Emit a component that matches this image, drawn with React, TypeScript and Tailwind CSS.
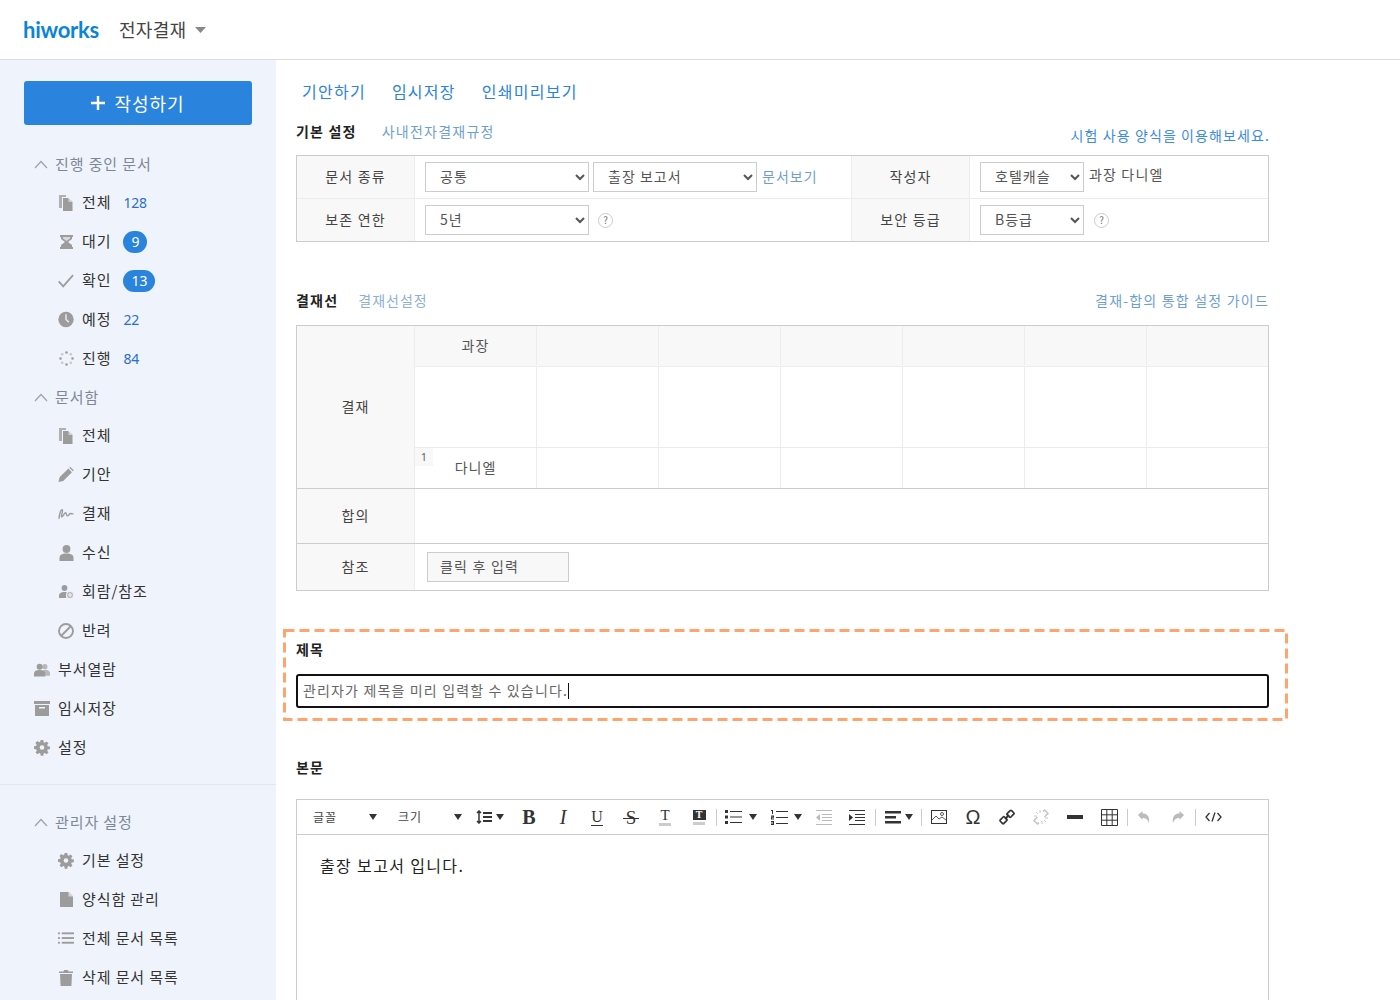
import React from "react";

const F = "[font-family:'Noto_Sans_CJK_KR','Noto_Sans',sans-serif]";
const G = "#9c9c9c";
const BG = "#eff3fb";

const Docs = () => (
  <svg width="14" height="16" viewBox="0 0 14 16"><path d="M0 0h7v2H3v11H0z" fill="#b0b0b0" /><path d="M4 3h5l4.500 4v9H4z" fill={G} /><path d="M9.500 3l4 4h-4z" fill="#d0d0d0" /></svg>
);
const Hourglass = () => (
  <svg width="13" height="14" viewBox="0 0 13 14"><path d="M0 0h13v2h-1v2L8 7l4 3v2h1v2H0v-2h1v-2l4-3-4-3V2H0z" fill={G} /><path d="M3 2h7v1.500L6.500 6 3 3.500z" fill="#d6d9df" /></svg>
);
const Check = () => (
  <svg width="17" height="14" viewBox="0 0 17 14"><path d="M.8 7.500l4.700 5.200L16 .8" stroke={G} strokeWidth="1.900" fill="none" /></svg>
);
const Clock = () => (
  <svg width="17" height="17" viewBox="0 0 17 17"><circle cx="8.500" cy="8.500" r="8.200" fill={G} /><path d="M8.500 3v5.500l3 3" stroke={BG} strokeWidth="1.400" fill="none" /></svg>
);
const Spinner = () => (
  <svg width="15" height="15" viewBox="0 0 15 15">
    {[[7.5,1.5],[11.8,3.2],[13.5,7.5],[11.8,11.8],[7.5,13.5],[3.2,11.8],[1.5,7.5],[3.2,3.2]].map(([x,y],i)=>(
      <circle key={i} cx={x} cy={y} r={1.3} fill={i%2?"#c8c8c8":G} />
    ))}
  </svg>
);
const Pencil = () => (
  <svg width="17" height="17" viewBox="0 0 17 17"><path d="M.5 16.500l1.200-5L11 2.200 14.800 6 5.500 15.300zM12 1.200l1-1 3.800 3.800-1 1z" fill={G} /></svg>
);
const Sign = () => (
  <svg width="17" height="12" viewBox="0 0 17 12"><path d="M1 11C1.500 6 3 1 4.500 1.500 6 2 2.500 9 4 9s3-5 4.200-4.300C9.500 5.500 8.500 8 10 8s2-3 3.500-2.500 2 .6 3 0" stroke={G} strokeWidth="1.500" fill="none" /></svg>
);
const User = () => (
  <svg width="15" height="16" viewBox="0 0 15 16"><circle cx="7.500" cy="4" r="3.900" fill={G} /><path d="M.5 16v-3c0-3 2-4.500 7-4.500s7 1.500 7 4.500v3z" fill={G} /></svg>
);
const UserPlus = () => (
  <svg width="15" height="14" viewBox="0 0 15 14"><circle cx="5.500" cy="3" r="2.900" fill={G} /><path d="M0 13v-2c0-3 2-4 5.500-4 1 0 2 .1 2.600.3L7 13z" fill={G} /><circle cx="11" cy="10" r="3.700" fill="#bdbdbd" stroke={BG} /><path d="M9 10h4M11 8v4" stroke={BG} /></svg>
);
const Ban = () => (
  <svg width="16" height="16" viewBox="0 0 16 16"><circle cx="8" cy="8" r="7" fill="none" stroke={G} strokeWidth="1.900" /><path d="M3 13L13 3" stroke={G} strokeWidth="1.900" /></svg>
);
const Users = () => (
  <svg width="17" height="14" viewBox="0 0 17 14"><circle cx="11.500" cy="3.500" r="2.800" fill="#b8b8b8" /><path d="M10 7h3c3 0 4 2 4 4v2h-6z" fill="#b8b8b8" /><circle cx="6" cy="3.500" r="3.200" fill={G} /><path d="M0 14v-3c0-3 2-4 6-4s6 1 6 4v3z" fill={G} /></svg>
);
const Archive = () => (
  <svg width="16" height="15" viewBox="0 0 16 15"><path d="M0 0h16v3H0z" fill={G} /><path d="M1 4h14v11H1z" fill={G} /><path d="M5 6h6v1.500H5z" fill={BG} /></svg>
);
const Gear = () => (
  <svg width="17" height="17" viewBox="0 0 24 24"><path fill={G} fillRule="evenodd" d="M14 .8l.5 3.300 1.700.7 2.700-1.900 2.800 2.800-1.900 2.700.7 1.700 3.300.5v4l-3.300.5-.7 1.700 1.900 2.700-2.800 2.800-2.700-1.900-1.700.7-.5 3.300h-4l-.5-3.300-1.700-.7-2.700 1.900-2.800-2.800 1.900-2.700-.7-1.700L0 14v-4l3.300-.5.7-1.700L2.100 5.100l2.800-2.800 2.700 1.900 1.700-.7L10 .8zM12 8.500a3.500 3.500 0 100 7 3.500 3.500 0 000-7z" /></svg>
);
const Doc = () => (
  <svg width="13" height="15" viewBox="0 0 13 15"><path d="M0 0h8.500L13 4.500V15H0z" fill={G} /><path d="M8.500 0L13 4.500H8.500z" fill="#d5d5d5" /></svg>
);
const ListI = () => (
  <svg width="17" height="13" viewBox="0 0 17 13"><g fill={G}><rect x="0" y="0" width="2" height="2" /><rect x="4" y="0" width="13" height="2" /><rect x="0" y="5" width="2" height="2" /><rect x="4" y="5" width="13" height="2" /><rect x="0" y="10" width="2" height="2" /><rect x="4" y="10" width="13" height="2" /></g></svg>
);
const Trash = () => (
  <svg width="14" height="16" viewBox="0 0 14 16"><path d="M5 0h4l.5 1.500H14V3H0V1.500H4.500zM1 4h12l-.6 12H1.600z" fill={G} /></svg>
);
const Chev = () => (
  <svg width="14" height="9" viewBox="0 0 14 9" className="shrink-0"><path d="M1 8l6-6.500L13 8" stroke="#9aa3ad" strokeWidth="1.200" fill="none" /></svg>
);

function Head({ t, c }: { t: string; c?: string }) {
  return (
    <div className={`flex h-[39px] items-center pl-[34px] ${c ?? ""}`}>
      <Chev />
      <span className="ml-[7px] text-[15px] tracking-[0.9px] text-[#7d8896]">{t}</span>
    </div>
  );
}
function Item({ icon, t, n, b }: { icon: React.ReactNode; t: string; n?: string; b?: string }) {
  return (
    <div className="flex h-[39px] items-center pb-[2px] pl-[58px]">
      <span className="flex w-[16px] justify-center">{icon}</span>
      <span className="ml-[8px] text-[15px] tracking-[0.9px] text-[#333]">{t}</span>
      {n && <span className="ml-[12px] text-[14px] tracking-[-0.2px] text-[#2a6fc9] [font-family:'Noto_Sans',sans-serif]">{n}</span>}
      {b && (
        <span className="ml-[12px] flex h-[22px] min-w-[24px] items-center justify-center rounded-full bg-[#2a83dc] px-[8px] text-[14px] text-white [font-family:'Noto_Sans',sans-serif]">
          {b}
        </span>
      )}
    </div>
  );
}
function Top({ icon, t, c }: { icon: React.ReactNode; t: string; c?: string }) {
  return (
    <div className={`flex h-[39px] items-center pl-[34px] ${c ?? ""}`}>
      <span className="flex w-[16px] justify-center">{icon}</span>
      <span className="ml-[8px] text-[15px] tracking-[0.9px] text-[#333]">{t}</span>
    </div>
  );
}

const Sel = ({ w, t }: { w: string; t: string }) => (
  <select defaultValue={t} className={`h-[30px] appearance-auto rounded-none border border-[#ccc] bg-white pb-[2px] pl-[10px] text-[14px] tracking-[1px] text-[#555] ${w}`}>
    <option>{t}</option>
  </select>
);
const Help = ({ c }: { c?: string }) => (
  <span className={`flex h-[15px] w-[15px] items-center justify-center rounded-full border border-[#ccc] text-[10px] leading-none text-[#777] ${c ?? "ml-[9px]"}`}>?</span>
);
const Th = ({ t }: { t: string }) => (
  <div className="flex w-[118px] shrink-0 items-center justify-center border-r border-[#ececec] bg-[#f8f8f8] pb-[2px] text-[14px] tracking-[1.15px] text-[#444]">{t}</div>
);

const ic = "#333";
const Tri = ({ c }: { c: string }) => <svg width="8" height="6" viewBox="0 0 8 6" className={`shrink-0 ${c}`}><path d="M0 0h8L4 6z" fill="#333" /></svg>;
const Sep = ({ c }: { c?: string }) => <span className={`h-[17px] w-px shrink-0 bg-[#ccc] ${c ?? ""}`} />;
const Tb = ({ c, children }: { c?: string; children: React.ReactNode }) => <span className={`flex w-[34px] shrink-0 items-center justify-center ${c ?? ""}`}>{children}</span>;
const Serif = "[font-family:'Liberation_Serif',serif]";

export default function App() {
  return (
    <div className={`h-[1000px] w-[1400px] overflow-hidden bg-white ${F}`}>
      <header className="flex h-[60px] items-center border-b border-[#dcdcdc] pl-[23px]">
        <span className="text-[22px] font-bold leading-none tracking-[-0.25px] text-[#0a84d8] [font-family:'Lato',sans-serif]">hiworks</span>
        <span className="ml-[20px] text-[18px] tracking-[0.3px] text-[#444]">전자결재</span>
        <svg width="11" height="6" viewBox="0 0 11 6" className="ml-[9px] mt-[1px]"><path d="M0 0h11L5.500 6z" fill="#888" /></svg>
      </header>
      <div className="flex h-[940px]">
        <aside className="w-[276px] shrink-0 bg-[#eff3fb]">
          <div className="px-[24px] pt-[21px]">
            <button className="flex h-[44px] w-[228px] items-center justify-center rounded-[3px] bg-[#2a83dc] text-[18px] tracking-[1px] text-white">
              <svg width="14" height="14" viewBox="0 0 14 14" className="mr-[9px]"><path d="M7 0v14M0 7h14" stroke="#fff" strokeWidth="2.400" /></svg>
              작성하기
            </button>
          </div>
          <div className="mt-[20px]">
            <Head t="진행 중인 문서" />
            <Item icon={<Docs />} t="전체" n="128" />
            <Item icon={<Hourglass />} t="대기" b="9" />
            <Item icon={<Check />} t="확인" b="13" />
            <Item icon={<Clock />} t="예정" n="22" />
            <Item icon={<Spinner />} t="진행" n="84" />
            <Head t="문서함" c="-mt-[1px]" />
            <Item icon={<Docs />} t="전체" />
            <Item icon={<Pencil />} t="기안" />
            <Item icon={<Sign />} t="결재" />
            <Item icon={<User />} t="수신" />
            <Item icon={<UserPlus />} t="회람/참조" />
            <Item icon={<Ban />} t="반려" />
            <Top icon={<Users />} t="부서열람" c="-mt-[1px]" />
            <Top icon={<Archive />} t="임시저장" />
            <Top icon={<Gear />} t="설정" />
          </div>
          <div className="mt-[17px] border-t border-[#e1e6ef] pt-[18px]">
            <Head t="관리자 설정" />
            <Item icon={<Gear />} t="기본 설정" />
            <Item icon={<Doc />} t="양식함 관리" />
            <Item icon={<ListI />} t="전체 문서 목록" />
            <Item icon={<Trash />} t="삭제 문서 목록" />
          </div>
        </aside>
        <main className="w-[993px] pl-[20px]">
          <div className="flex h-[64px] items-center pb-[2px] pl-[6px] text-[16px] tracking-[1.25px] text-[#2a83dc]">
            <span>기안하기</span><span className="ml-[26px]">임시저장</span><span className="ml-[26px]">인쇄미리보기</span>
          </div>
          <div className="-mt-[3px] flex h-[34px] items-start justify-between">
            <div className="flex items-center">
              <span className="text-[14px] font-semibold tracking-[1.2px] text-[#222]">기본 설정</span>
              <span className="ml-[25px] text-[14px] tracking-[1.25px] text-[#6f9fd0]">사내전자결재규정</span>
            </div>
            <span className="-mr-[1px] pt-[4px] text-[14px] tracking-[1.1px] text-[#3d8be0]">시험 사용 양식을 이용해보세요.</span>
          </div>
          <div className="w-[973px] border border-[#ccc]">
            <div className="flex h-[43px] border-b border-[#ececec]">
              <Th t="문서 종류" />
              <div className="flex w-[437px] items-center border-r border-[#ececec] pl-[10px]">
                <Sel w="w-[164px]" t="공통" />
                <Sel w="ml-[4px] w-[164px]" t="출장 보고서" />
                <span className="mb-[2px] ml-[5px] text-[14px] tracking-[1px] text-[#6f9fd0]">문서보기</span>
              </div>
              <Th t="작성자" />
              <div className="flex items-center pl-[10px]">
                <Sel w="w-[104px]" t="호텔캐슬" />
                <span className="mb-[6px] ml-[5px] text-[14px] tracking-[1.15px] text-[#555]">과장 다니엘</span>
              </div>
            </div>
            <div className="flex h-[42px]">
              <Th t="보존 연한" />
              <div className="flex w-[437px] items-center border-r border-[#ececec] pl-[10px]">
                <Sel w="w-[164px]" t="5년" />
                <Help />
              </div>
              <Th t="보안 등급" />
              <div className="flex items-center pl-[10px]">
                <Sel w="w-[104px]" t="B등급" />
                <Help c="ml-[10px]" />
              </div>
            </div>
          </div>
          <div className="mt-[41px] flex h-[42px] items-start justify-between pt-[7px]">
            <div className="flex items-center">
              <span className="text-[14px] font-semibold tracking-[1.2px] text-[#222]">결재선</span>
              <span className="ml-[20px] text-[14px] tracking-[1px] text-[#8eb0d4]">결재선설정</span>
            </div>
            <span className="text-[14px] tracking-[1.2px] text-[#6f9fd0]">결재-합의 통합 설정 가이드</span>
          </div>
          <div className="w-[973px] border border-[#ccc]">
            <div className="flex h-[163px] border-b border-[#ccc]">
              <Th t="결재" />
              <div className="flex-1">
                <div className="flex h-[41px] border-b border-[#ececec] bg-[#f8f8f8] pb-[1px] text-[14px] tracking-[1px] text-[#555]">
                  {["과장", "", "", "", "", "", ""].map((t, i) => (
                    <div key={i} className={`flex items-center justify-center ${i < 6 ? "w-[122px] border-r border-[#ececec]" : "w-[121px]"}`}>{t}</div>
                  ))}
                </div>
                <div className="flex h-[81px] border-b border-[#ececec]">
                  {[0, 1, 2, 3, 4, 5, 6].map((i) => (
                    <div key={i} className={i < 6 ? "w-[122px] border-r border-[#ececec]" : "w-[121px]"} />
                  ))}
                </div>
                <div className="flex h-[40px] text-[14px] tracking-[1px] text-[#555]">
                  {["다니엘", "", "", "", "", "", ""].map((t, i) => (
                    <div key={i} className={`relative flex items-center justify-center ${i < 6 ? "w-[122px] border-r border-[#ececec]" : "w-[121px]"}`}>
                      {i === 0 && <span className="absolute left-0 top-0 flex h-[18px] w-[18px] items-center justify-center bg-[#f8f8f8] text-[11px] tracking-normal text-[#666] [font-family:'Noto_Sans',sans-serif]">1</span>}
                      <span className="-mt-[1px]">{t}</span>
                    </div>
                  ))}
                </div>
              </div>
            </div>
            <div className="flex h-[55px] border-b border-[#ccc]">
              <Th t="합의" />
            </div>
            <div className="flex h-[46px]">
              <Th t="참조" />
              <div className="flex items-center pl-[12px]">
                <div className="flex h-[30px] w-[142px] items-center border border-[#ccc] bg-[#f8f8f8] pb-[2px] pl-[12px] text-[14px] tracking-[1.2px] text-[#555]">클릭 후 입력</div>
              </div>
            </div>
          </div>
          <div className="relative -ml-[13px] mt-[38px] h-[92px] w-[1005px] px-[13px] pt-[10px]">
            <svg width="1005" height="92" viewBox="0 0 1005 92" className="absolute left-0 top-0">
              <rect x="1.500" y="1.500" width="1002" height="89" fill="none" stroke="#ffa46c" strokeWidth="3" strokeDasharray="10 5" />
            </svg>
            <div className="text-[14px] font-semibold leading-[20px] tracking-[1px] text-[#222]">제목</div>
            <div className="mt-[15px] flex h-[34px] w-[973px] items-center rounded-[3px] border-2 border-[#111] pb-[1px] pl-[5px] text-[14px] tracking-[1.15px] text-[#666]">
              관리자가 제목을 미리 입력할 수 있습니다.
              <span className="h-[16px] w-px bg-[#111]" />
            </div>
          </div>
          <div className="mt-[36px] text-[14px] font-semibold leading-[20px] tracking-[1px] text-[#222]">본문</div>
          <div className="mt-[22px] h-[300px] w-[973px] border border-[#ccc]">
            <div className="flex h-[35px] items-center border-b border-[#ccc] pl-[16px] text-[#333]">
              <span className="w-[56px] shrink-0 text-[12px] tracking-[1px] text-[#444]">글꼴</span>
              <Tri c="" />
              <span className="ml-[21px] w-[56px] shrink-0 text-[12px] tracking-[1px] text-[#444]">크기</span>
              <Tri c="" />
              <svg width="17" height="14" viewBox="0 0 17 14" className="ml-[14px] shrink-0"><path d="M3 1v12M1 3l2-2 2 2M1 11l2 2 2-2" stroke={ic} strokeWidth="1.500" fill="none" /><path d="M7 2h9v2H7zM7 6h9v2H7zM7 10h9v2H7z" fill={ic} /></svg>
              <Tri c="ml-[3px]" />
              <Tb c="ml-[8px]"><span className={`text-[20px] font-bold leading-none text-[#333] ${Serif}`}>B</span></Tb>
              <Tb><span className={`text-[20px] italic leading-none text-[#333] ${Serif}`}>I</span></Tb>
              <Tb><span className={`border-b border-[#333] text-[16px] leading-[16px] text-[#333] ${Serif}`}>U</span></Tb>
              <Tb><span className={`relative text-[19px] leading-none text-[#333] ${Serif}`}>S<span className="absolute -left-[3px] -right-[3px] top-[10px] h-px bg-[#333]" /></span></Tb>
              <Tb><span className="flex flex-col items-center"><span className={`text-[15px] leading-[14px] text-[#333] ${Serif}`}>T</span><span className="mt-[1px] h-[3px] w-[12px] bg-[#ccc]" /></span></Tb>
              <Tb><span className="flex flex-col items-center"><span className={`flex h-[10px] w-[13px] items-center justify-center bg-[#333] text-[10px] font-bold leading-none text-white ${Serif}`}>T</span><span className="mt-[2px] h-[3px] w-[12px] bg-[#ccc]" /></span></Tb>
              <Sep />
              <svg width="17" height="14" viewBox="0 0 17 14" className="ml-[8px] shrink-0"><path d="M0 0h3v3H0zM0 5.500h3v3H0zM0 11h3v3H0z" fill={ic} /><path d="M5 1.500h12M5 7h12M5 12.500h12" stroke={ic} /></svg>
              <Tri c="ml-[7px]" />
              <svg width="17" height="15" viewBox="0 0 17 15" className="ml-[14px] shrink-0"><path d="M5 1.500h12M5 7.500h12M5 13.500h12" stroke={ic} /><path d="M0 0h2v4H1V1H0zM0 5.500h3v2.200H1v.8h2v1H0V6.800h2v-.3H0zM0 11h3v4H0v-1h2v-.5H0v-1h2V12H0z" fill={ic} /></svg>
              <Tri c="ml-[6px]" />
              <svg width="16" height="15" viewBox="0 0 16 15" className="ml-[14px] shrink-0"><path d="M0 .5h16M6 4.500h10M6 7.500h10M6 10.500h10M0 14.500h16" stroke="#bbb" /><path d="M4 4v7L0 7.500z" fill="#bbb" /></svg>
              <svg width="16" height="15" viewBox="0 0 16 15" className="ml-[17px] shrink-0"><path d="M0 .5h16M6 4.500h10M6 7.500h10M6 10.500h10M0 14.500h16" stroke={ic} /><path d="M0 4v7l4-3.500z" fill={ic} /></svg>
              <Sep c="ml-[10px]" />
              <svg width="16" height="13" viewBox="0 0 16 13" className="ml-[9px] shrink-0"><path d="M0 0h16v2.500H0zM0 5h11v2.500H0zM0 10h16v2.500H0z" fill={ic} /></svg>
              <Tri c="ml-[4px]" />
              <Sep c="ml-[8px]" />
              <svg width="16" height="14" viewBox="0 0 16 14" className="ml-[9px] shrink-0"><rect x=".5" y=".5" width="15" height="13" fill="none" stroke={ic} /><path d="M1 10l4-4 3 3 3-2 4 3" fill="none" stroke={ic} strokeWidth=".8" /><circle cx="11" cy="4" r="1.500" fill="none" stroke={ic} strokeWidth=".8" /></svg>
              <Tb c="ml-[9px]"><span className="text-[20px] leading-none text-[#333] [font-family:'Liberation_Sans',sans-serif]">Ω</span></Tb>
              <Tb><svg width="16" height="16" viewBox="0 0 16 16"><g fill="none" stroke={ic} strokeWidth="1.700"><rect x="9" y="1.800" width="5" height="6" rx="1" transform="rotate(45 11.500 4.800)" /><rect x="2" y="8.200" width="5" height="6" rx="1" transform="rotate(45 4.500 11.200)" /></g><path d="M6 10l4-4" stroke={ic} strokeWidth="1.800" /></svg></Tb>
              <Tb><svg width="16" height="16" viewBox="0 0 16 16"><g fill="none" stroke="#c4c4c4" strokeWidth="1.500"><path d="M10 2.500l1.500-1.500 3.500 3.500-1.500 1.500-2 2" /><path d="M6 13.500L4.500 15 1 11.500 2.500 10l2-2" /></g><path d="M7 1v3M1 7h3M15 9h-3M9 15v-3M3 3l2 2M13 13l-2-2" stroke="#c4c4c4" /></svg></Tb>
              <Tb><span className="h-[4px] w-[16px] bg-[#333]" /></Tb>
              <Tb><svg width="17" height="17" viewBox="0 0 17 17"><path d="M.5.500h16v16H.5zM.5 5.800h16M.5 11.200h16M5.800.5v16M11.200.5v16" fill="none" stroke={ic} /></svg></Tb>
              <Sep c="ml-[1px]" />
              <span className="flex w-[32px] shrink-0 items-center justify-center"><svg width="12" height="13" viewBox="0 0 12 13"><path d="M0 4l4.500-4v2.500C9 2.500 12 5 11 12.500 10 8.500 8 7 4.500 7v2z" fill="#bbb" /></svg></span>
              <Tb c="ml-[1px]"><svg width="12" height="13" viewBox="0 0 12 13"><path d="M12 4L7.500 0v2.500C3 2.500 0 5 1 12.500 2 8.500 4 7 7.500 7v2z" fill="#bbb" /></svg></Tb>
              <Sep />
              <Tb><svg width="17" height="10" viewBox="0 0 17 10"><path d="M4.500 1L1 5l3.500 4M12.500 1L16 5l-3.500 4M10 .5L7 9.500" fill="none" stroke={ic} strokeWidth="1.300" /></svg></Tb>
            </div>
            <div className="pl-[23px] pt-[19px] text-[16px] leading-[22px] tracking-[1.35px] text-[#222]">출장 보고서 입니다.</div>
          </div>
        </main>
      </div>
    </div>
  );
}
